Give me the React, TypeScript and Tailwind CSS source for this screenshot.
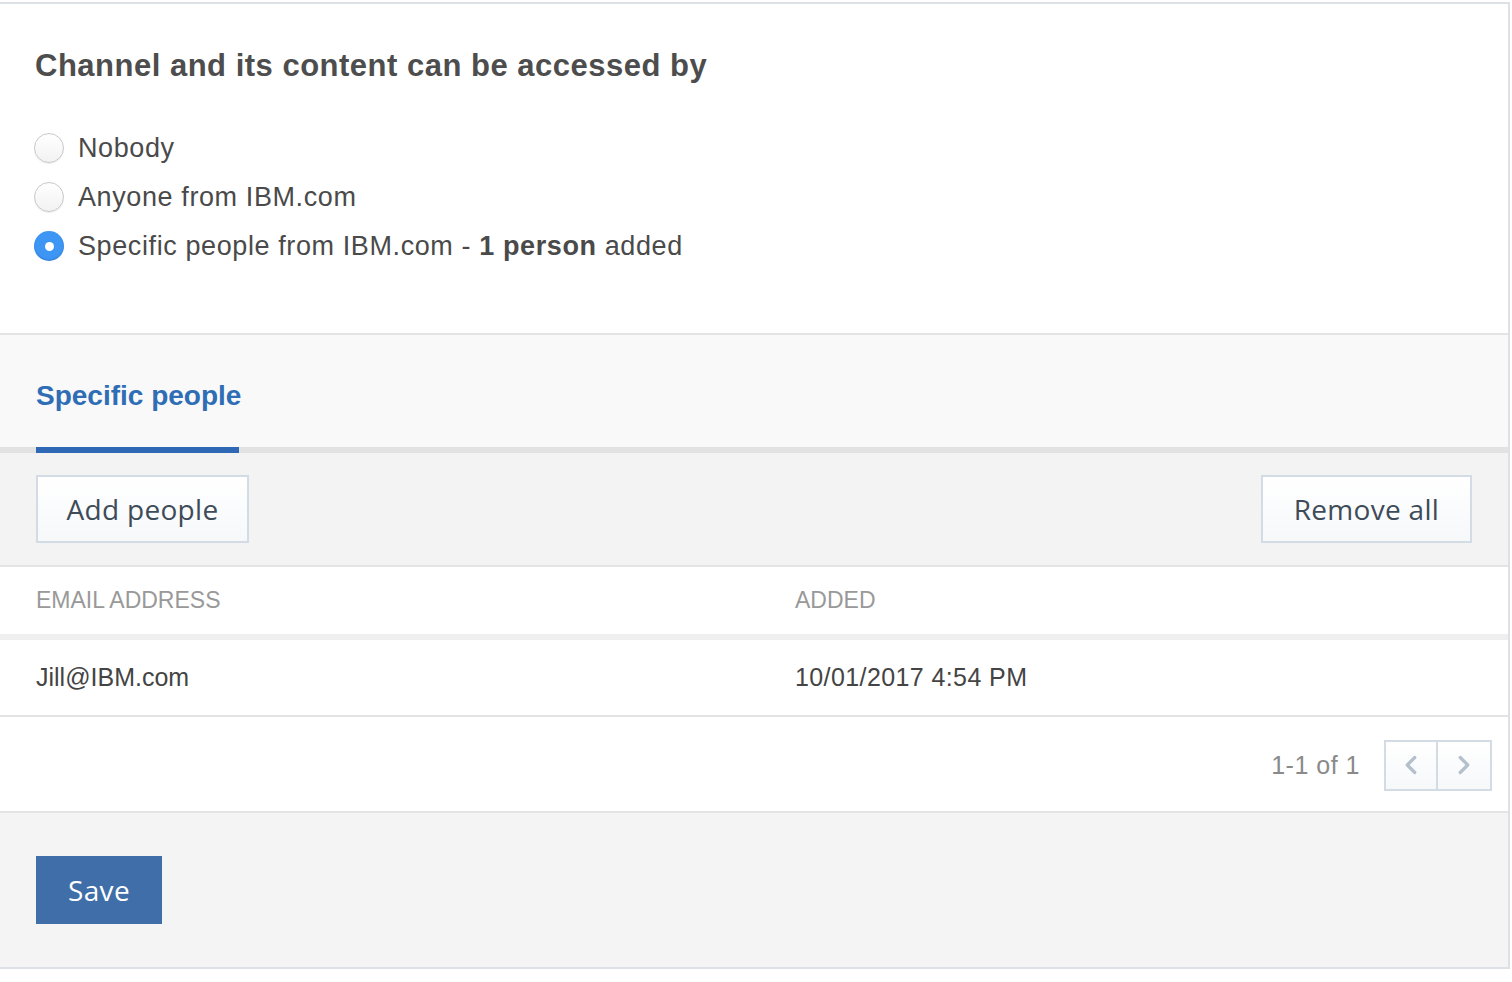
import { ChevronLeft, ChevronRight } from 'lucide-react';

const options = [
  { label: 'Nobody', checked: false },
  { label: 'Anyone from IBM.com', checked: false },
  { label: 'Specific people from IBM.com', checked: true },
];

function Radio({ checked }: { checked: boolean }) {
  if (checked) {
    return (
      <span className="flex h-[30px] w-[30px] shrink-0 items-center justify-center rounded-full bg-[#3d95f4] shadow-[inset_0_-1px_2px_rgba(0,0,0,0.15)]">
        <span className="h-[9px] w-[9px] rounded-full bg-white" />
      </span>
    );
  }
  return (
    <span className="h-[30px] w-[30px] shrink-0 rounded-full border border-[#c9c9c9] bg-gradient-to-b from-white to-[#f2f2f2] shadow-[0_1px_1px_rgba(0,0,0,0.08)]" />
  );
}

export default function App() {
  return (
    <div className="min-h-screen bg-white pt-[2px] font-['Liberation_Sans',Arial,sans-serif]">
      <div className="w-[1510px] border-y-2 border-r-2 border-[#dde1e6]">
        {/* Access options */}
        <section className="h-[329px] bg-white pl-[34px] pr-[35px] pt-[43px]">
          <h1 className="pl-[1px] text-[31px] font-bold leading-[38px] tracking-[0.5px] text-[#4d4d4d]">
            Channel and its content can be accessed by
          </h1>
          <div className="mt-[48px] flex flex-col gap-[19px]">
            {options.map((o) => (
              <label key={o.label} className="flex h-[30px] items-center gap-[14px] text-[27px] tracking-[0.6px] text-[#4a4a4a]">
                <Radio checked={o.checked} />
                <span>
                  {o.label}
                  {o.checked && (
                    <>
                      {' - '}
                      <b className="font-bold">1 person</b> added
                    </>
                  )}
                </span>
              </label>
            ))}
          </div>
        </section>

        {/* Tabs */}
        <div className="border-t-2 border-[#e4e4e4] bg-[#f9f9f9]">
          <div className="flex h-[112px] items-end px-[36px]">
            <div className="flex h-full flex-col">
              <div className="flex flex-1 items-center pt-[10px] text-[28px] font-bold text-[#2f6db5]">
                Specific people
              </div>
            </div>
          </div>
          <div className="h-[6px] bg-[#e2e2e2] px-[36px]">
            <div className="h-full w-[203px] bg-[#2f68b4]" />
          </div>
        </div>

        {/* Toolbar */}
        <div className="flex h-[112px] items-center justify-between bg-[#f3f3f3] px-[36px] font-['Open_Sans',sans-serif]">
          <button className="h-[68px] w-[213px] border-2 border-[#d3dbe4] bg-gradient-to-b from-white to-[#f6f8fa] text-[28px] tracking-[0.3px] text-[#3e4b58]">
            Add people
          </button>
          <button className="h-[68px] w-[211px] border-2 border-[#d3dbe4] bg-gradient-to-b from-white to-[#f6f8fa] text-[28px] tracking-[0.3px] text-[#3e4b58]">
            Remove all
          </button>
        </div>

        {/* Table */}
        <div className="border-t-2 border-[#e4e4e4] bg-white">
          <div className="grid h-[67px] grid-cols-[759px_1fr] items-center px-[36px] text-[23px] text-[#999999]">
            <div>EMAIL ADDRESS</div>
            <div>ADDED</div>
          </div>
          <div className="h-[6px] bg-[#efefef]" />
          <div className="grid h-[75px] grid-cols-[759px_1fr] items-center px-[36px] text-[25px] text-[#444444]">
            <div>Jill@IBM.com</div>
            <div className="tracking-[0.4px]">10/01/2017 4:54 PM</div>
          </div>
          <div className="flex h-[96px] items-center justify-end gap-[24px] border-t-2 border-[#e4e4e4] pr-[16px]">
            <span className="pt-[4px] text-[25px] tracking-[0.5px] text-[#8a8a8a]">1-1 of 1</span>
            <div className="mt-[2px] flex h-[51px] border-2 border-[#d3dbe4]">
              <button className="flex w-[52px] items-center justify-center border-r-2 border-[#d3dbe4] bg-gradient-to-b from-white to-[#f6f8fa] text-[#b4c0cc]">
                <ChevronLeft size={30} strokeWidth={2.6} />
              </button>
              <button className="flex w-[52px] items-center justify-center bg-gradient-to-b from-white to-[#f6f8fa] text-[#b4c0cc]">
                <ChevronRight size={30} strokeWidth={2.6} />
              </button>
            </div>
          </div>
        </div>

        {/* Footer */}
        <div className="flex h-[156px] items-center border-t-2 border-[#e4e4e4] bg-[#f4f4f4] px-[36px]">
          <button className="h-[68px] w-[126px] bg-[#3f6ea8] font-['Open_Sans',sans-serif] text-[28px] tracking-[0.3px] text-white">
            Save
          </button>
        </div>
      </div>
    </div>
  );
}
